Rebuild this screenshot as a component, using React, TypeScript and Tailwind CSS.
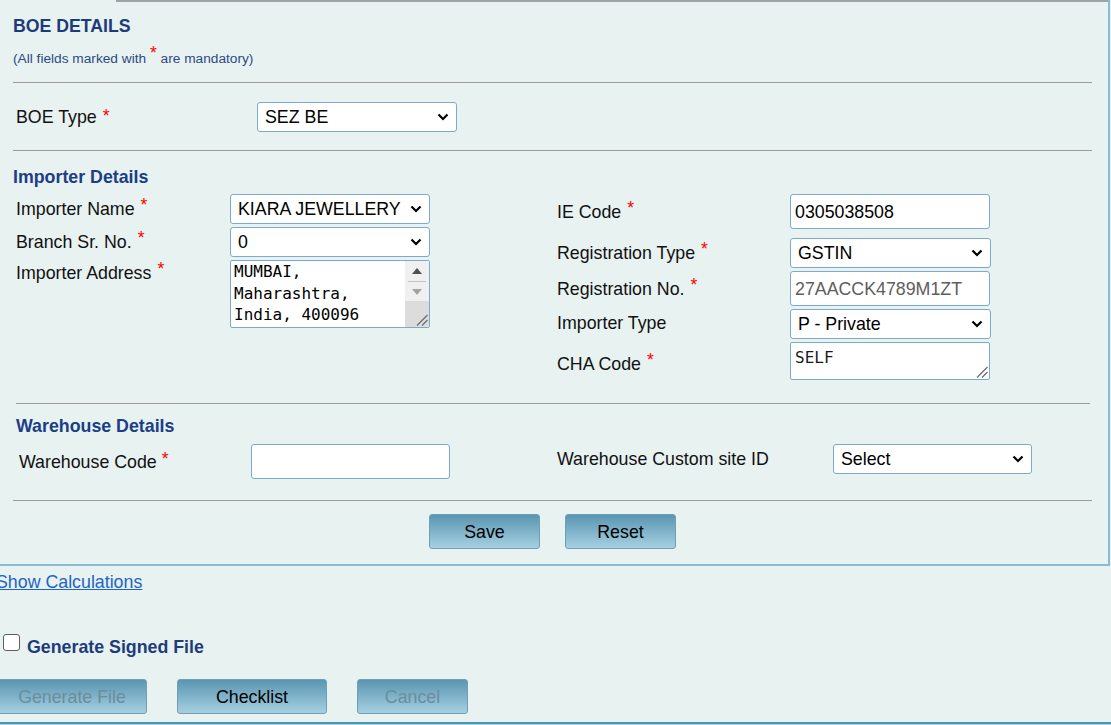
import React from "react"

// red mandatory mark, lifted a little above the text line
function Star({ className = "ml-[6px] -top-[4px]" }: { className?: string }) {
  return <span className={`relative text-[17.6px] leading-[0] text-[#f00] ${className}`}>*</span>
}

function Chevron() {
  return (
    <svg width="12" height="8" viewBox="0 0 12 8" className="shrink-0">
      <path d="M1.5 1.5 L6 6 L10.5 1.5" fill="none" stroke="#000" strokeWidth="2.2" />
    </svg>
  )
}

function Grip() {
  return (
    <svg width="12" height="12" viewBox="0 0 12 12">
      <path d="M1 11.5 L11.5 1 M6 11.5 L11.5 6" stroke="#6b6b6b" strokeWidth="1.2" fill="none" />
    </svg>
  )
}

function Select({ value, width = "w-[200px]" }: { value: string; width?: string }) {
  return (
    <div className={`flex h-[30px] ${width} items-center justify-between rounded-[3px] border border-[#7aabcf] bg-white pl-[7px] pr-[7px] text-black`}>
      <span className="flex-1 overflow-hidden whitespace-nowrap">{value}</span>
      <Chevron />
    </div>
  )
}

function Input({ value = "", width = "w-[200px]", muted = false }: { value?: string; width?: string; muted?: boolean }) {
  return (
    <div className={`flex h-[35px] ${width} items-center rounded-[3px] border border-[#7aabcf] bg-white pl-[4px] ${muted ? "text-[#5e5e5e]" : "text-black"}`}>
      {value}
    </div>
  )
}

function Btn({ label, width, disabled = false }: { label: string; width: string; disabled?: boolean }) {
  return (
    <div className={`flex h-[35px] ${width} shrink-0 items-center justify-center rounded-[3px] border border-[#6f9fb8] bg-linear-to-b from-[#5a96b1] to-[#a6d0e2] ${disabled ? "text-[#6c8d9c]" : "text-black"}`}>
      {label}
    </div>
  )
}

function AddressArea() {
  return (
    <div className="flex h-[68px] w-[200px] overflow-hidden rounded-[2px] border border-[#7aabcf] bg-white">
      <div className="flex-1 whitespace-pre pl-[3px] font-['DejaVu_Sans_Mono',monospace] text-[16px] leading-[21.5px] text-black">
        {"MUMBAI,\nMaharashtra,\nIndia, 400096"}
      </div>
      <div className="flex w-[24px] flex-col bg-[#f0f0f0]">
        <div className="flex h-[20px] items-center justify-center">
          <svg width="10" height="6" viewBox="0 0 10 6">
            <path d="M0 6 L5 0 L10 6Z" fill="#505050" />
          </svg>
        </div>
        <div className="mx-[3px] h-px bg-[#c4c4c4]" />
        <div className="flex h-[19px] items-center justify-center">
          <svg width="10" height="6" viewBox="0 0 10 6">
            <path d="M0 0 L10 0 L5 6Z" fill="#a3a3a3" />
          </svg>
        </div>
        <div className="flex flex-1 items-end justify-end bg-[#dcdcdc] pb-[1px] pr-[1px]">
          <Grip />
        </div>
      </div>
    </div>
  )
}

function ChaArea() {
  return (
    <div className="flex h-[38px] w-[200px] rounded-[2px] border border-[#7aabcf] bg-white">
      <div className="flex-1 pl-[4px] pt-[4px] font-['DejaVu_Sans_Mono',monospace] text-[16px] leading-[21px] text-[#1a1a1a]">
        SELF
      </div>
      <div className="flex items-end pb-[1px] pr-[1px]">
        <Grip />
      </div>
    </div>
  )
}

export default function App() {
  return (
    <div className="h-[725px] w-full overflow-hidden bg-[#e8f2f1] font-['Liberation_Sans',Arial,sans-serif] text-[17.8px] leading-[20px] text-[#111]">
      {/* Main panel */}
      <div className="w-[1110px] border-r-2 border-b-2 border-[#86bcd4] pb-[15px]">
        <div className="ml-[116px] h-[2px] bg-[#9ea3a8]" />
        <div className="pl-[13px]">
          <h1 className="mt-[14px] text-[17.7px] font-bold text-[#1d3b7a]">BOE DETAILS</h1>
          <p className="mt-[15px] h-[16px] text-[13.7px] leading-[16px] text-[#2b4a85]">
            (All fields marked with <Star className="-top-[4px]" /> are mandatory)
          </p>
          <div className="mt-[15px] h-px w-[1079px] bg-[#9b9b9b]" />

          {/* BOE Type */}
          <div className="mt-[19px] flex items-center pl-[3px]">
            <div className="w-[241px]">
              BOE Type<Star className="ml-[6px] -top-[1.5px]" />
            </div>
            <Select value="SEZ BE" />
          </div>
          <div className="mt-[18px] h-px w-[1079px] bg-[#9b9b9b]" />

          {/* Importer Details */}
          <h2 className="mt-[16px] font-bold text-[#1b3e86]">Importer Details</h2>
          <div className="mt-[7px] flex items-start">
            <div className="w-[544px] pl-[3px]">
              <div className="flex h-[30px] items-center">
                <div className="w-[214px]">Importer Name<Star /></div>
                <Select value="KIARA JEWELLERY" />
              </div>
              <div className="mt-[3px] flex h-[30px] items-center">
                <div className="w-[214px]">Branch Sr. No.<Star /></div>
                <Select value="0" />
              </div>
              <div className="mt-[3px] flex items-start">
                <div className="w-[214px] pt-[3px]">Importer Address<Star /></div>
                <AddressArea />
              </div>
            </div>
            <div>
              <div className="flex h-[35px] items-center">
                <div className="w-[233px]">IE Code<Star /></div>
                <Input value="0305038508" />
              </div>
              <div className="mt-[9px] flex h-[30px] items-center">
                <div className="w-[233px]">Registration Type<Star /></div>
                <Select value="GSTIN" width="w-[201px]" />
              </div>
              <div className="mt-[3px] flex h-[35px] items-center">
                <div className="w-[233px]">Registration No.<Star /></div>
                <Input value="27AACCK4789M1ZT" muted />
              </div>
              <div className="mt-[3px] flex h-[30px] items-center">
                <div className="w-[233px] -mt-[3px]">Importer Type</div>
                <Select value="P - Private" width="w-[201px]" />
              </div>
              <div className="mt-[3px] flex h-[38px] items-center">
                <div className="w-[233px] mt-[5px]">CHA Code<Star /></div>
                <ChaArea />
              </div>
            </div>
          </div>
          <div className="ml-[3px] mt-[23px] h-px w-[1074px] bg-[#9b9b9b]" />

          {/* Warehouse Details */}
          <h2 className="mt-[12px] pl-[3px] font-bold text-[#1b3e86]">Warehouse Details</h2>
          <div className="mt-[8px] flex items-start">
            <div className="flex h-[35px] w-[544px] items-center pl-[6px]">
              <div className="w-[232px]">
                Warehouse Code<Star className="ml-[5px] -top-[3px]" />
              </div>
              <Input width="w-[199px]" />
            </div>
            <div className="flex h-[30px] items-center">
              <div className="w-[276px]">Warehouse Custom site ID</div>
              <Select value="Select" width="w-[199px]" />
            </div>
          </div>
          <div className="mt-[21px] h-px w-[1079px] bg-[#9b9b9b]" />

          <div className="mt-[13px] flex w-[1079px] justify-center gap-[25px]">
            <Btn label="Save" width="w-[111px]" />
            <Btn label="Reset" width="w-[111px]" />
          </div>
        </div>
      </div>

      {/* Below the panel */}
      <div className="-ml-[4px] mt-[6px] text-[#1e64c6] underline">Show Calculations</div>

      <div className="mt-[42px] flex items-start">
        <div className="ml-[3px] h-[17px] w-[17px] rounded-[3px] border border-[#5f5f5f] bg-white" />
        <div className="ml-[7px] mt-[3px] font-bold text-[#1e3c7c]">Generate Signed File</div>
      </div>

      <div className="-ml-[3px] mt-[22px] flex gap-[30px]">
        <Btn label="Generate File" width="w-[150px]" disabled />
        <Btn label="Checklist" width="w-[150px]" />
        <Btn label="Cancel" width="w-[111px]" disabled />
      </div>

      <div className="mt-[8px] h-[20px] border-t-2 border-[#4b93b9] bg-[#a9d0e1]" />
    </div>
  )
}
